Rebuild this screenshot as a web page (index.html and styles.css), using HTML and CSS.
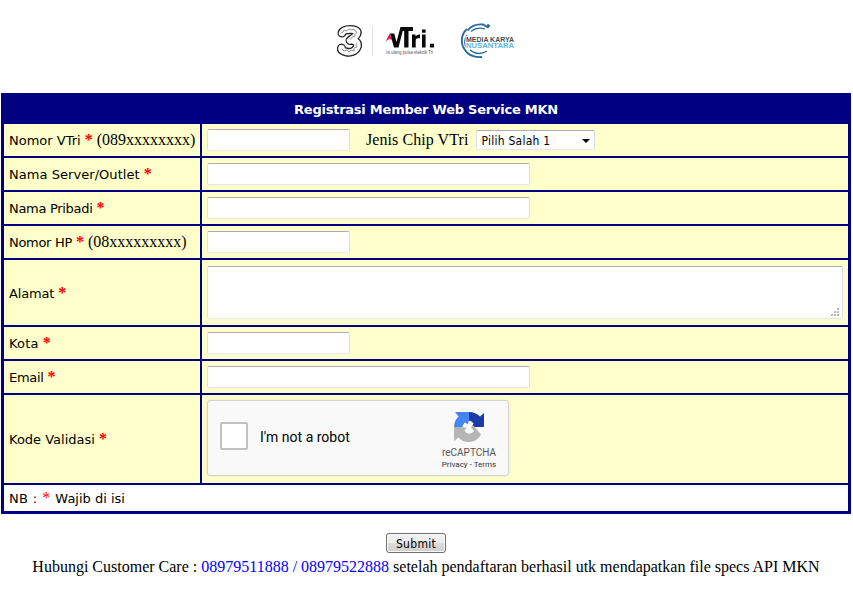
FILE: index.html
```html
<!DOCTYPE html>
<html lang="id">
<head>
<meta charset="utf-8">
<title>Registrasi Member Web Service MKN</title>
<link rel="stylesheet" href="styles.css">
</head>
<body>
<header class="logos">
<svg width="180" height="40" viewBox="336 20 180 40" role="img" aria-label="3, vTri, Media Karya Nusantara">
  <g fill="none" stroke-linecap="round" stroke-linejoin="round">
    <path d="M342 33C343 30 347 29.500 351 29.500C355 29.500 358 31 357 33.500C356 37 352 39 350 40.500C355 40 358 42 357.500 46C356 51 351 53 346.500 52C343 51.500 341 50 341.500 48" stroke="#222" stroke-width="9"/>
    <path d="M342 33C343 30 347 29.500 351 29.500C355 29.500 358 31 357 33.500C356 37 352 39 350 40.500C355 40 358 42 357.500 46C356 51 351 53 346.500 52C343 51.500 341 50 341.500 48" stroke="#fff" stroke-width="6.400"/>
    <path d="M341 33l2-1 1-2 2 1 3-2 2 1 3-1 1 2 2 1-2 2 0 2-3 1-1 2M357 43l-1 2 1 2-3 1 0 3-3-1-2 2-2-2-3 1-2-2" stroke="#777" stroke-width=".8"/>
  </g>
  <path d="M372.500 26V56" stroke="#e2e2e2"/>
  <path d="M385.800 41.500L389.500 33.500L392 40L389.500 38.700Z" fill="#f20d58"/>
  <path d="M390 33.500h4.200l2.300 8.500 4-15H413v4h-4.500v16.500h-4.300V31h-1.500L398.500 47.500h-4.500Z" fill="#080808"/>
  <path d="M412 34.500h3.500v2q1.500-2.500 4.500-2v3.800q-4.300-.7-4.300 2v7.200H412zM422 34.500h3.600v13H422zM422 29.500h3.600v3.200H422zM430 43.700h4v3.800h-4z" fill="#080808"/>
  <text x="386" y="54.300" textLength="47" lengthAdjust="spacingAndGlyphs" class="logo-caption">Isi ulang pulsa elektrik Tri</text>
  <g fill="none" stroke="#286a9e">
    <path d="M467 29A15.500 15.500 0 0 0 465 50Q470 58 482 57" stroke-width="1.900"/>
    <path d="M467.500 30.500Q473 23.500 483 24.500L488 27.500" stroke-width="1.900"/>
    <path d="M471 31.500Q477 26.500 485 29M467 35Q463 41 466 47M470 50Q478 56.500 487 51" stroke-width="1.300"/>
    <path d="M487.300 27.500l1.700-3" stroke-width="2.800"/>
  </g>
  <path d="M465.500 36h14v12.500h-14z" fill="#fff"/>
  <text x="466" y="42" textLength="48" lengthAdjust="spacingAndGlyphs" class="brand brand-top">MEDIA KARYA</text>
  <text x="466" y="48" textLength="48" lengthAdjust="spacingAndGlyphs" class="brand brand-bottom">NUSANTARA</text>
</svg>
</header>
<form class="registration">
  <div class="title"><span>Registrasi Member Web Service MKN</span></div>
  <div class="cell"><span class="label">Nomor VTri</span><b class="req">*</b><span class="hint">(089xxxxxxxx)</span></div>
  <div class="cell"><input class="field" type="text"><span class="chip">Jenis Chip VTri</span><div class="select" role="combobox"><span>Pilih Salah 1</span><svg width="8" height="4"><path d="M0 0h8L4 4z"/></svg></div></div>
  <div class="cell"><span class="label loose">Nama Server/Outlet</span><b class="req">*</b></div>
  <div class="cell"><input class="field wide" type="text"></div>
  <div class="cell"><span class="label tight">Nama Pribadi</span><b class="req">*</b></div>
  <div class="cell"><input class="field wide" type="text"></div>
  <div class="cell"><span class="label tight">Nomor HP</span><b class="req">*</b><span class="hint">(08xxxxxxxxx)</span></div>
  <div class="cell"><input class="field" type="text"></div>
  <div class="cell"><span class="label snug">Alamat</span><b class="req">*</b></div>
  <div class="cell"><div class="area"><textarea class="field"></textarea><svg class="grip" width="8" height="8"><path d="M6 0h2v2H6zM3 3h2v2H3zM6 3h2v2H6zM0 6h2v2H0zM3 6h2v2H3zM6 6h2v2H6z" fill="#b9b9b9"/></svg></div></div>
  <div class="cell"><span class="label loose-short">Kota</span><b class="req">*</b></div>
  <div class="cell"><input class="field" type="text"></div>
  <div class="cell"><span class="label tight">Email</span><b class="req">*</b></div>
  <div class="cell"><input class="field wide" type="text"></div>
  <div class="cell"><span class="label">Kode Validasi</span><b class="req">*</b></div>
  <div class="cell">
    <div class="captcha">
      <span class="check"></span><span class="robot">I'm not a robot</span>
      <div class="captcha-brand">
        <svg width="32" height="32" viewBox="0 0 32 32">
          <path d="M16 1Q22.500 1 27 5.500L31 2V16H17L20.500 12.500Q19 10 16 9.500Z" fill="#1c3aa9"/>
          <path d="M1 16Q1 10 5.500 5.500L2 1H16V15L12.500 11.500Q9.500 13 9.500 16Z" fill="#4285f4"/>
          <path d="M1 16H15L11.500 19.500Q13 22.500 16 22.500Q19 22.500 21 20L17.500 16.500L20 14L28 23.500Q24 31 16 31Q9.500 31 5.500 26.500L1 30Z" fill="#b5b5b5"/>
          <path d="M9.500 16L12 12L14 14.500L16 9.500L18 13L20.500 12.500L18 17L21 20L16 22.500L11.500 19.500L14 17Z" fill="#f9f9f9"/>
        </svg>
        <span class="captcha-name">reCAPTCHA</span>
        <span class="captcha-links">Privacy - Terms</span>
      </div>
    </div>
  </div>
  <div class="cell note"><span class="nb">NB :</span><span class="req">*</span><span class="must">Wajib di isi</span></div>
</form>
<footer>
  <button class="submit" type="button">Submit</button>
  <p class="contact">Hubungi Customer Care : <span class="phone">08979511888 / 08979522888</span> setelah pendaftaran berhasil utk mendapatkan file specs API MKN</p>
</footer>
</body>
</html>
```
FILE: styles.css
```css
* { box-sizing: border-box; }
body { margin: 0; background: #fff; color: #000; font: 16px/18px "Liberation Serif", serif; overflow: hidden; }
.logos { height: 93px; padding: 20px 0 0 336px; }
.logos svg { display: block; }
.logo-caption { font: 4.5px "Liberation Sans", sans-serif; fill: #555; }
.brand { font: bold 6.3px "Liberation Sans", sans-serif; }
.brand-top { fill: #484d54; }
.brand-bottom { fill: #58b8e2; }
.registration {
  display: grid;
  grid-template-columns: 196px 646px;
  grid-template-rows: 26px 32px 32px 32px 32px 65px 32px 32px 88px 26px;
  gap: 2px;
  width: 850px;
  height: 421px;
  margin-left: 1px;
  border: 3px solid #000080;
  background: #000080;
}
.title { grid-column: 1 / -1; display: flex; align-items: center; justify-content: center; padding-top: 2px; color: #fff; font: bold 13px/16px "DejaVu Sans", sans-serif; letter-spacing: -.24px; }
.cell { display: flex; align-items: center; padding-left: 5px; background: #ffffcc; white-space: pre; }
.note { grid-column: 1 / -1; background: #fff; }
.label, .nb, .must { padding-top: 2px; font: 13px/16px "DejaVu Sans", sans-serif; }
.loose { letter-spacing: .05px; }
.loose-short { letter-spacing: .2px; }
.tight { letter-spacing: -.3px; }
.snug { letter-spacing: -.17px; }
.nb { letter-spacing: .3px; }
.req { margin: 0 4px; color: #f00; }
.note .req { margin: 0 5px; }
.field { display: block; width: 143px; height: 22px; margin: 0; padding: 0; border: 1px solid; border-color: #abadb3 #dbdfe6 #e3e9ef #e2e3ea; border-radius: 2px; background: #fff; outline: 0; }
.wide { width: 323px; }
.area { position: relative; width: 636px; height: 53px; }
.area .field { width: 100%; height: 100%; resize: none; }
.grip { position: absolute; right: 4px; bottom: 3px; }
.chip { margin: 0 8px 0 16px; letter-spacing: .07px; }
.select { display: flex; align-items: center; justify-content: space-between; width: 119px; height: 20px; padding: 1px 4px 0; border: 1px solid; border-color: #abadb3 #dbdfe6 #e3e9ef #e2e3ea; border-radius: 2px; background: #fff; font: 12px/16px "DejaVu Sans Condensed", "DejaVu Sans", sans-serif; letter-spacing: .25px; }
.captcha { display: flex; align-items: center; width: 302px; height: 76px; margin-top: -2px; padding-left: 12px; border: 1px solid #d3d3d3; border-radius: 3px; background: #f9f9f9; box-shadow: 0 0 3px rgba(0, 0, 0, .1); font-family: Roboto, sans-serif; }
.check { width: 28px; height: 28px; margin-top: -4px; border: 2px solid #c1c1c1; border-radius: 2px; background: #fff; }
.robot { margin: -2px 0 0 12px; font-size: 14px; }
.captcha-brand { display: flex; flex-direction: column; align-items: center; width: 60px; height: 74px; margin: 0 9px 0 auto; padding-top: 10px; color: #555; }
.captcha-name { height: 14px; margin-top: 3px; font-size: 10px; line-height: 14px; }
.captcha-links { font-size: 8px; line-height: 10px; color: #333; }
footer { display: flex; flex-direction: column; align-items: center; width: 852px; padding-top: 19px; }
.submit { width: 60px; height: 20px; margin-right: 20px; padding: 1px 0 0; border: 1px solid #707070; border-radius: 3px; background: linear-gradient(#f2f2f2, #ebebeb 50%, #ddd 50%, #cfcfcf); box-shadow: inset 0 0 0 1px #fafafa; font: 12px/16px "DejaVu Sans Condensed", "DejaVu Sans", sans-serif; letter-spacing: .3px; }
.contact { margin: 5px 0 0; white-space: nowrap; }
.phone { color: #00f; }
```
